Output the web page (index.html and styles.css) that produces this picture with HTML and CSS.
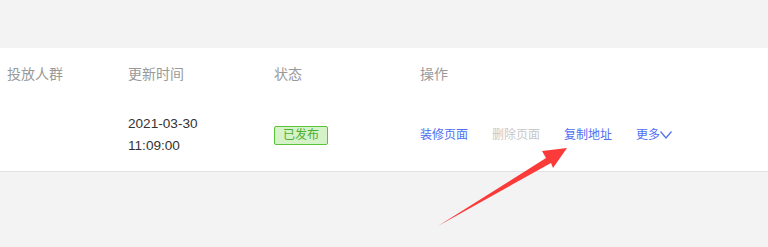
FILE: index.html
```html
<!DOCTYPE html>
<html lang="zh">
<head>
<meta charset="utf-8">
<link rel="stylesheet" href="styles.css">
</head>
<body>
<div class="page">
  <div class="panel">
    <div class="row head">
      <div class="c1">投放人群</div>
      <div class="c2">更新时间</div>
      <div class="c3">状态</div>
      <div class="c4">操作</div>
    </div>
    <div class="row body">
      <div class="c1"></div>
      <div class="c2 date">2021-03-30<br>11:09:00</div>
      <div class="c3"><span class="badge">已发布</span></div>
      <div class="c4 ops">
        <a class="link">装修页面</a>
        <a class="link disabled">删除页面</a>
        <a class="link">复制地址</a>
        <a class="link more">更多<svg class="chev" width="12" height="8" viewBox="0 0 12 8"><polyline points="0.5,0.5 6,7 11.5,0.5" fill="none" stroke="#4f6ef2" stroke-width="1.2"/></svg></a>
      </div>
    </div>
  </div>
  <svg class="arrow" width="768" height="247" viewBox="0 0 768 247">
    <polygon points="438,226 546,158 542,151 567,148 553,168 551,163" fill="#fb3a3a"/>
  </svg>
</div>
</body>
</html>
```
FILE: styles.css
```css
html, body {
  margin: 0;
  padding: 0;
  background: #f3f3f3;
}
.page {
  position: relative;
  width: 768px;
  height: 247px;
  padding-top: 48px;
  box-sizing: border-box;
  font-family: "Liberation Sans", "Noto Sans CJK SC", sans-serif;
}
.panel {
  background: #fff;
  border-bottom: 1px solid #e2e2e2;
}
.row {
  display: grid;
  grid-template-columns: 121px 146px 146px 1fr;
  padding-left: 7px;
  align-items: center;
}
.head {
  height: 50px;
  font-size: 14px;
  color: #999;
}
.body {
  height: 73px;
}
.date {
  font-size: 13.6px;
  line-height: 22px;
  color: #333;
}
.badge {
  display: inline-block;
  border: 1px solid #59c33a;
  background: #d6f2c9;
  color: #4cb02c;
  font-size: 12px;
  line-height: 17px;
  padding: 0 8px;
  border-radius: 2px;
}
.ops {
  display: flex;
  gap: 24px;
  align-items: center;
  font-size: 12px;
}
.link {
  color: #4f6ef2;
  line-height: 16px;
}
.link.disabled {
  color: #c8c8c8;
}
.more {
  display: flex;
  align-items: center;
}
.arrow {
  position: absolute;
  left: 0;
  top: 0;
  pointer-events: none;
}
```
